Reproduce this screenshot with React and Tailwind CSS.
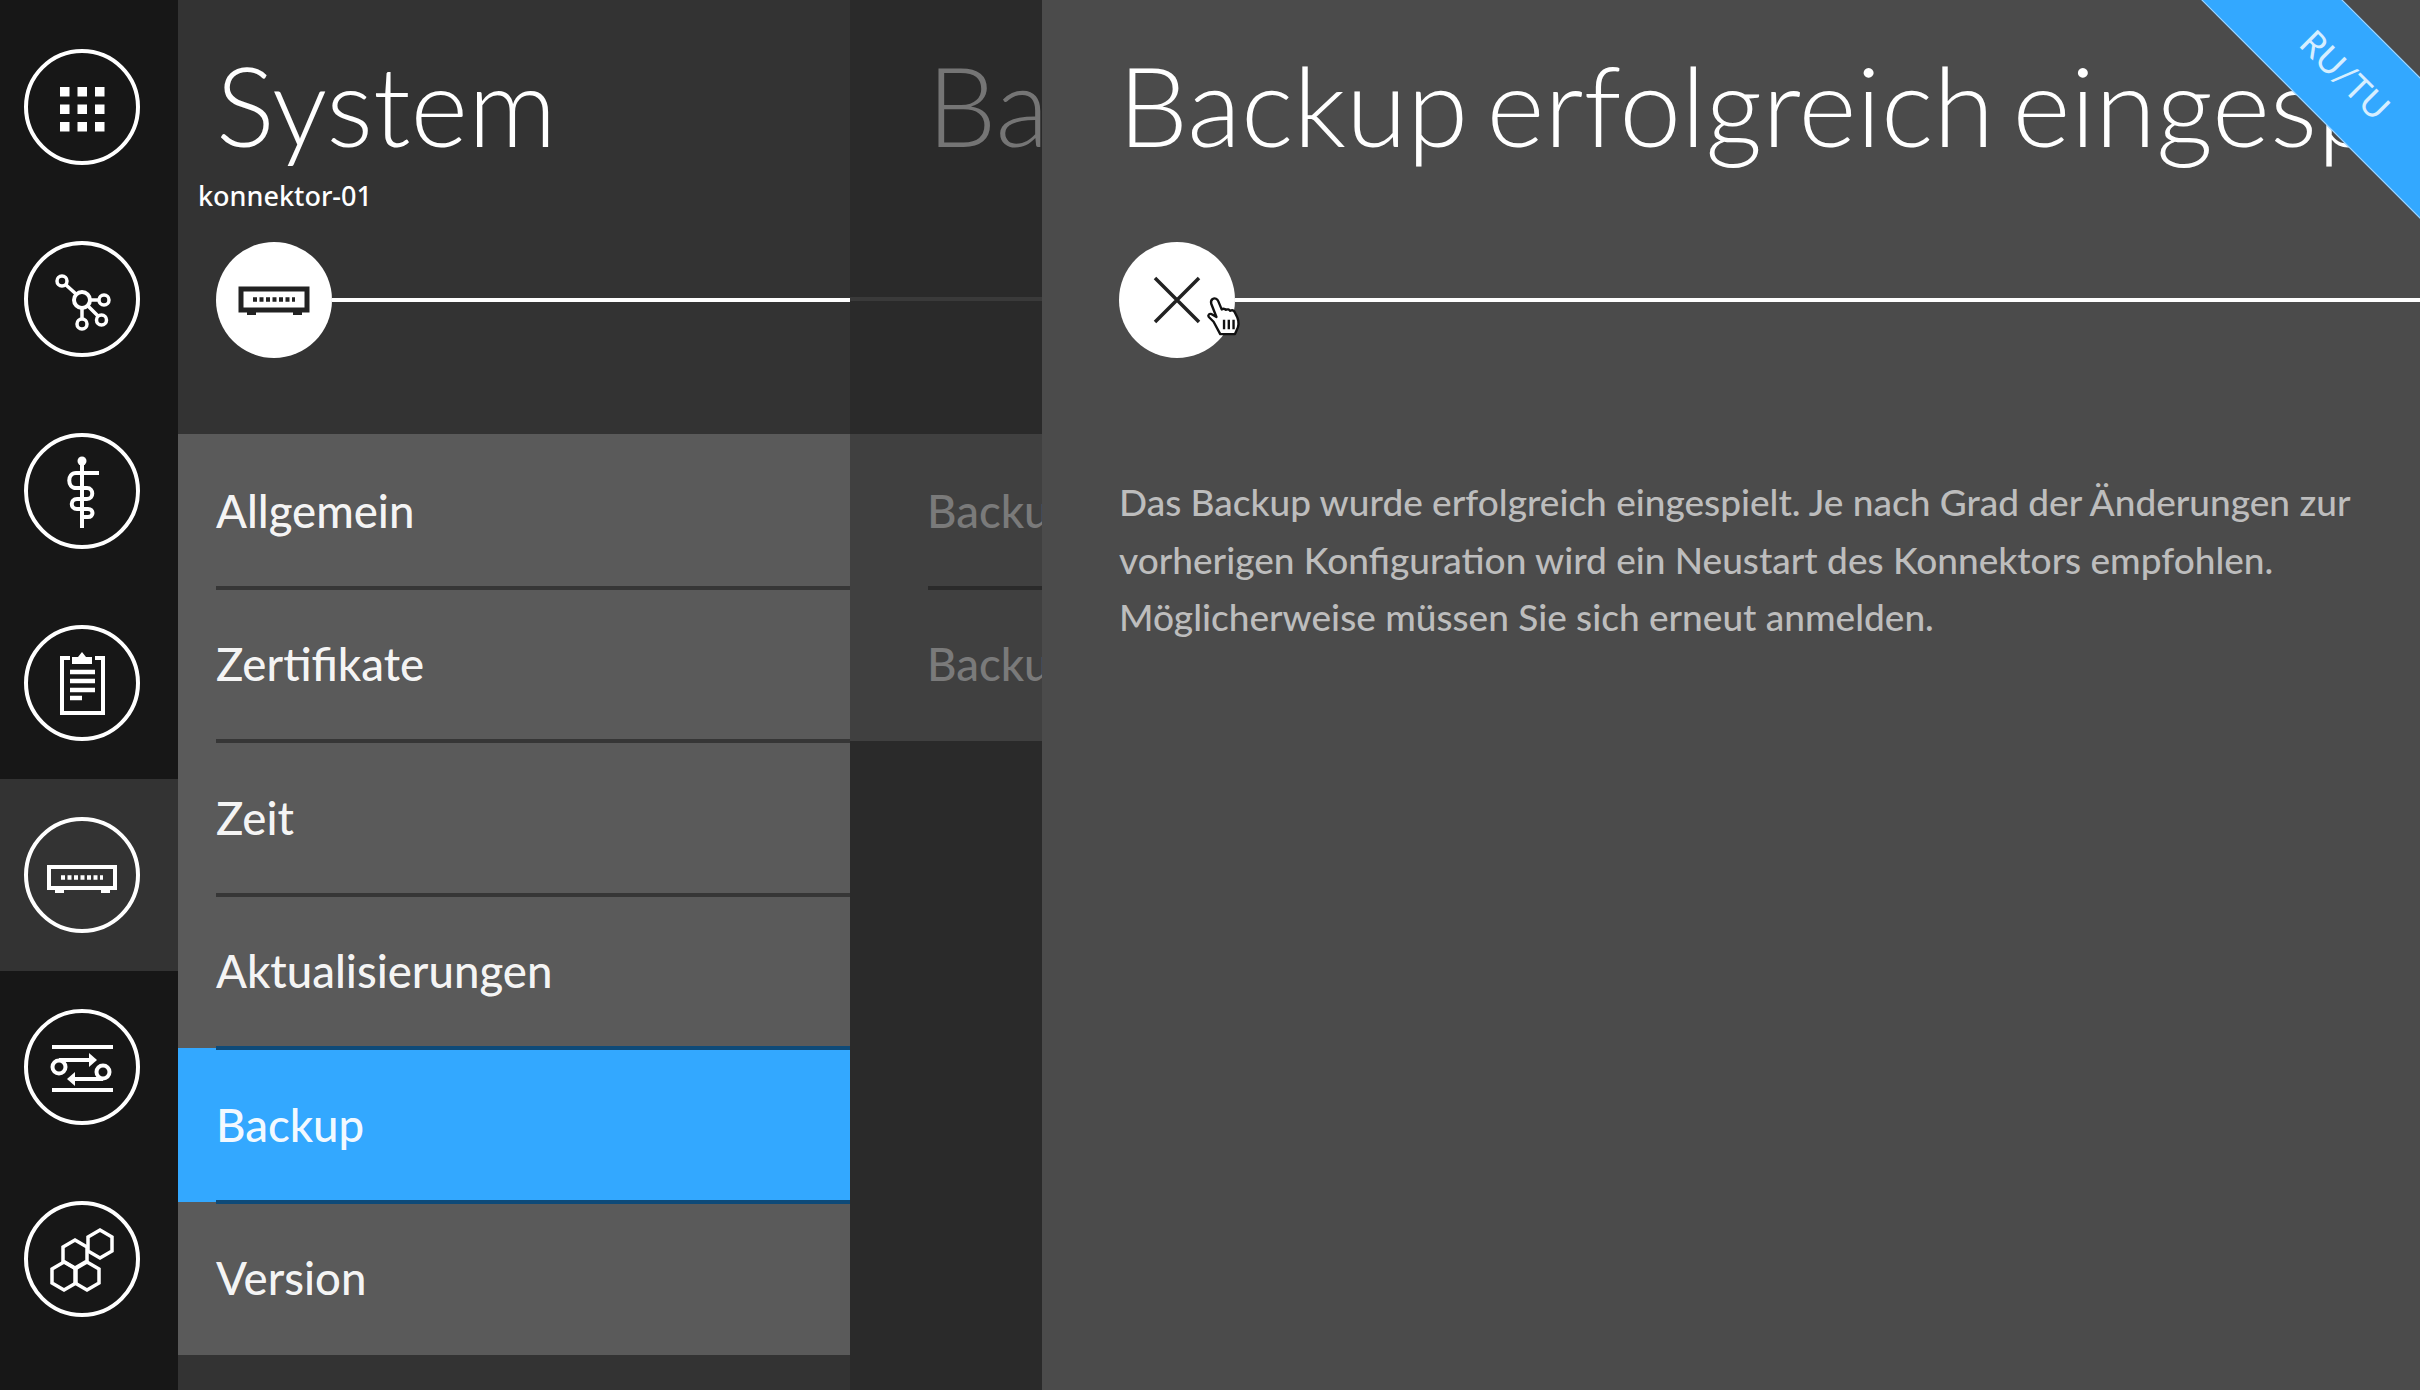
import React from 'react';

const font = "font-['Lato','Noto_Sans',sans-serif]";

function IconGrid() {
  const cols = [36, 53.500, 71];
  const rows = [38, 55.500, 73];
  return (
    <g fill="currentColor" stroke="none">
      {rows.map((y) => cols.map((x) => <rect key={`${x}-${y}`} x={x} y={y} width="9.500" height="9.500" />))}
    </g>
  );
}

function IconNetwork() {
  return (
    <g fill="none" stroke="currentColor" strokeWidth="3.500">
      <circle cx="58" cy="59" r="8" strokeWidth="4" />
      <circle cx="38" cy="40" r="5" />
      <circle cx="80" cy="59" r="5" />
      <circle cx="77.500" cy="79" r="5" />
      <circle cx="58" cy="83" r="5" />
      <path d="M41.500 43.500 52 53M66 59h9M64 65l10 10M58 67v11" />
    </g>
  );
}

function IconRod() {
  return (
    <g fill="none" stroke="currentColor" strokeWidth="4">
      <circle cx="58" cy="28" r="4.500" fill="currentColor" stroke="none" />
      <path d="M58 28v67" />
      <path d="M75 40H52c-9 0-9 15 0 15h11c7 0 7 11 0 11H53c-7 0-7 10 0 10h11c6 0 6 8 0 8h-6" />
    </g>
  );
}

function IconClipboard() {
  return (
    <g fill="none" stroke="currentColor">
      <path d="M46 33h-8v55h41V33h-8" strokeWidth="4" />
      <path d="M48 39v-7h6l4-5 4 5h6v7z" fill="currentColor" stroke="none" />
      <path d="M46 47h25M46 56h25M46 65h25M46 73h12" strokeWidth="4.500" />
    </g>
  );
}

function IconSwitch({ heavy }) {
  return (
    <g fill="none" stroke="currentColor">
      <rect x="25" y="50" width="66" height="21" strokeWidth={heavy ? 5 : 4} />
      <path d="M31 73h9v3h-9zM77 73h9v3h-9z" fill="currentColor" stroke="none" />
      <path d="M37 60.500h42" strokeWidth="4.500" strokeDasharray="4 2.500" />
    </g>
  );
}

function IconSliders() {
  return (
    <g fill="none" stroke="currentColor" strokeWidth="4">
      <path d="M28 38h61M28 81h61" />
      <circle cx="35" cy="58" r="6.500" />
      <path d="M35 51h32" />
      <path d="M65 44l8 7-8 7z" fill="currentColor" stroke="none" />
      <circle cx="79" cy="63" r="6.500" />
      <path d="M79 70H49" />
      <path d="M51 63l-8 7 8 7z" fill="currentColor" stroke="none" />
    </g>
  );
}

function IconHex() {
  const hex = 'M0-14 12-7V7L0 14-12 7V-7z';
  return (
    <g fill="none" stroke="currentColor" strokeWidth="3.500">
      <path transform="translate(76 43)" d={hex} />
      <path transform="translate(51 53)" d={hex} />
      <path transform="translate(40 75)" d={hex} />
      <path transform="translate(63 75)" d={hex} />
    </g>
  );
}

function RoundIcon({ children }) {
  return (
    <svg width="116" height="116" viewBox="0 0 116 116" className="text-white">
      <circle cx="58" cy="58" r="56" fill="none" stroke="currentColor" strokeWidth="4" />
      {children}
    </svg>
  );
}

const navIcons = [IconGrid, IconNetwork, IconRod, IconClipboard, IconSwitch, IconSliders, IconHex];

function Sidebar() {
  return (
    <div className="w-[178px] shrink-0 bg-[#171717] pt-[11px]">
      {navIcons.map((Icon, i) => (
        <div key={i} className={`h-[192px] flex items-center pl-[24px] ${i === 4 ? 'bg-[#333333]' : ''}`}>
          <RoundIcon>
            <Icon />
          </RoundIcon>
        </div>
      ))}
    </div>
  );
}

const menu = ['Allgemein', 'Zertifikate', 'Zeit', 'Aktualisierungen', 'Backup', 'Version'];

function Menu() {
  return (
    <div>
      {menu.map((label, i) => {
        const active = label === 'Backup';
        return (
          <div key={label} className={`relative h-[153.500px] flex items-center pl-[38px] ${active ? 'bg-[#33a8ff]' : 'bg-[#5a5a5a]'}`}>
            <span className="text-[45.500px] font-medium text-white/95">{label}</span>
            {i < menu.length - 1 && (
              <div className={`absolute left-[38px] right-0 bottom-[-2px] h-[4px] ${active || label === 'Aktualisierungen' ? 'bg-[#0e4a78]' : 'bg-[#363636]'} z-10`} />
            )}
          </div>
        );
      })}
    </div>
  );
}

function HandCursor() {
  return (
    <svg width="38" height="42" viewBox="0 0 40 44" className="absolute left-[87px] top-[54px]">
      <path
        d="M7 3c2.500-1.500 5 0 6 2.500l3.500 8.500c1.500-1 3.500-.5 4.500.5 1.500-1 3.500-.5 4.500 1 1.500-.8 3.500-.5 4.500 1l3 6c2 5 1.500 9-.5 13l-2 4.500H15L8 27 3 22c-1.500-2 .5-4 3-3l5 3L5.500 8C5 6 5.500 4 7 3z"
        fill="#fff"
        stroke="#111"
        strokeWidth="2.500"
        strokeLinejoin="round"
      />
      <path d="M19 25v10M24 25v10M29 25v10" stroke="#111" strokeWidth="2.500" />
    </svg>
  );
}

export default function App() {
  return (
    <div className={`w-[2420px] h-[1390px] flex overflow-hidden bg-[#2a2a2a] ${font}`}>
      <Sidebar />

      {/* System column */}
      <div className="w-[672px] shrink-0 bg-[#333333] h-full flex flex-col">
        <div className="h-[434px] shrink-0 relative">
          <h1 className="pl-[38px] pt-[40px] text-[110px] leading-[128px] font-light text-white">System</h1>
          <div className="pl-[20px] mt-[9px] text-[27px] leading-[38px] font-medium text-white font-['Noto_Sans',sans-serif]">konnektor-01</div>
          <div className="flex items-center pl-[38px] mt-[27px]">
            <div className="w-[116px] h-[116px] rounded-full bg-white shrink-0 flex items-center justify-center text-[#222222]">
              <svg width="116" height="116" viewBox="0 0 116 116">
                <g transform="translate(0 -3)"><IconSwitch heavy /></g>
              </svg>
            </div>
            <div className="h-[4px] flex-1 bg-white" />
          </div>
        </div>
        <Menu />
      </div>

      {/* Backup column, cut off by the detail panel */}
      <div className="w-[192px] shrink-0 h-full overflow-hidden bg-[#2a2a2a] whitespace-nowrap">
        <div className="h-[434px] relative">
          <div className="pl-[77px] pt-[40px] text-[110px] leading-[128px] font-light text-[#757575]">Backup</div>
          <div className="mt-[129px] h-[4px] bg-[#3a3a3a]" />
        </div>
        <div className="bg-[#404040]">
          <div className="relative h-[153.500px] flex items-center pl-[77px] text-[45.500px] font-medium text-[#7a7a7a]">
            Backup
            <div className="absolute left-[78px] right-0 bottom-[-2px] h-[4px] bg-[#2a2a2a]" />
          </div>
          <div className="h-[153px] flex items-center pl-[77px] text-[45.500px] font-medium text-[#7a7a7a]">Backup</div>
        </div>
      </div>

      {/* Detail panel */}
      <div className="flex-1 relative overflow-hidden bg-[#4b4b4b] whitespace-nowrap">
        <h1 className="pl-[76px] pt-[40px] text-[111px] leading-[128px] font-light text-white [word-spacing:-12px]">Backup erfolgreich eingespielt</h1>
        <div className="flex items-center pl-[77px] mt-[74px]">
          <div className="relative w-[116px] h-[116px] rounded-full bg-white shrink-0 flex items-center justify-center">
            <svg width="48" height="48" viewBox="0 0 48 48">
              <path d="M2 2l44 44M46 2 2 46" stroke="#222" strokeWidth="3.500" fill="none" />
            </svg>
            <HandCursor />
          </div>
          <div className="h-[4px] flex-1 bg-white" />
        </div>
        <p className="pl-[77px] mt-[115px] text-[37px] leading-[57.500px] font-medium text-[#bdbdbd]">
          Das Backup wurde erfolgreich eingespielt. Je nach Grad der Änderungen zur
          <br />
          vorherigen Konfiguration wird ein Neustart des Konnektors empfohlen.
          <br />
          Möglicherweise müssen Sie sich erneut anmelden.
        </p>

        <div className="absolute top-[24px] right-[-126px] w-[400px] h-[100px] rotate-45 bg-[#33a8ff] border-y border-[#a8d8ff] flex items-center justify-center text-[35px] font-normal text-[#d6eeff]">
          RU/TU
        </div>
      </div>
    </div>
  );
}
